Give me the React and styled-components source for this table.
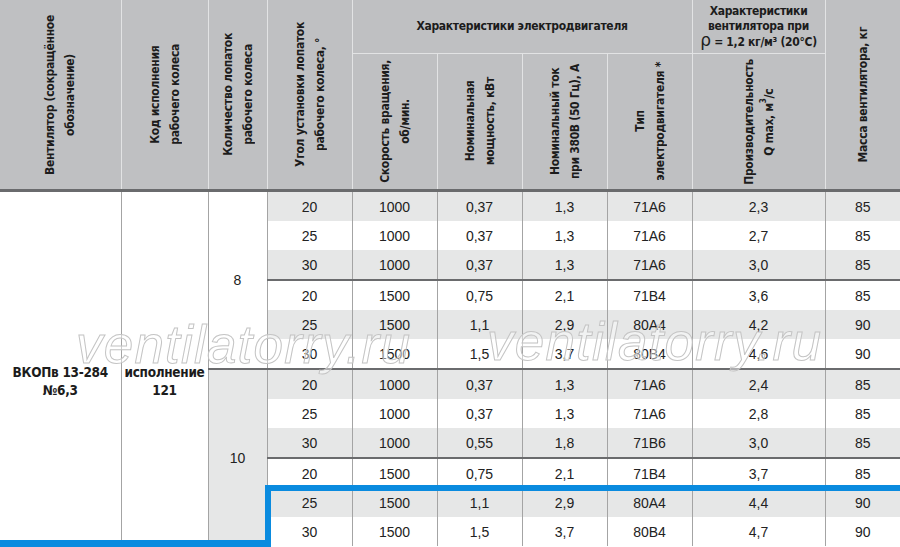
import React from 'react';
import styled, { createGlobalStyle } from 'styled-components';

const GlobalStyle = createGlobalStyle`
  html, body {
    margin: 0;
    padding: 0;
    background: #fff;
    overflow: hidden;
  }
  body {
    font-family: "Liberation Sans", Arial, sans-serif;
  }
`;

const NARROW = `"Liberation Sans Narrow", "DejaVu Sans Condensed", "Liberation Sans", sans-serif`;

const Page = styled.div`
  position: relative;
  width: 900px;
  height: 547px;
  overflow: hidden;
`;

const Table = styled.table`
  width: 900px;
  border-collapse: collapse;
  table-layout: fixed;
`;

const HeadCell = styled.th`
  background: #bfc0c2;
  color: #1c1c1c;
  font-family: ${NARROW};
  font-weight: bold;
  font-size: 12px;
  letter-spacing: -0.3px;
  line-height: 15px;
  padding: 0;
  text-align: center;
  vertical-align: middle;
  white-space: nowrap;
  overflow: hidden;
  border-left: 1px solid #e2e3e4;
  border-right: 1px solid #e2e3e4;
  border-top: none;
  border-bottom: ${(p) => (p.$group ? '1px solid #e2e3e4' : '3px solid #6a6b6d')};
  height: ${(p) => p.$h || 'auto'};
  &:first-child { border-left: none; }
  &:last-child { border-right: none; }
`;

const Vertical = styled.div`
  display: inline-block;
  vertical-align: middle;
  writing-mode: vertical-rl;
  transform: rotate(180deg);
  white-space: nowrap;
  text-align: center;
  line-height: 20px;
`;

const Rho = styled.span`
  font-family: "DejaVu Sans", sans-serif;
  font-size: 17px;
  font-weight: normal;
  line-height: 12px;
`;

const Sup = styled.sup`
  font-size: 8px;
  line-height: 0;
`;

const Cell = styled.td`
  height: 29px;
  padding: 0;
  text-align: center;
  vertical-align: middle;
  font-size: 14px;
  color: #222;
  background: ${(p) => (p.$shade ? '#e6e7e7' : '#fff')};
  border-left: 1px solid #a4a4a4;
  border-right: 1px solid #a4a4a4;
  border-top: ${(p) => (p.$sep ? '2px solid #6a6b6d' : 'none')};
  &:last-child { border-right: none; }
`;

const NameCell = styled.td`
  padding: 24px 0 0;
  text-align: center;
  vertical-align: middle;
  background: #fff;
  font-family: ${NARROW};
  font-weight: bold;
  font-size: 13.5px;
  letter-spacing: -0.3px;
  line-height: 18px;
  color: #1c1c1c;
  white-space: nowrap;
  border-right: 1px solid #a4a4a4;
`;

const Watermark = styled.span`
  position: absolute;
  top: ${(p) => p.$top}px;
  left: ${(p) => p.$left}px;
  font-family: "Liberation Sans", Arial, sans-serif;
  font-style: italic;
  font-size: 53px;
  letter-spacing: 1.2px;
  color: rgba(255, 255, 255, 0.45);
  -webkit-text-stroke: 1px #c4c4c4;
  pointer-events: none;
  white-space: nowrap;
`;

const Frame = styled.div`
  position: absolute;
  left: 265px;
  top: 485px;
  right: -10px;
  bottom: -10px;
  border-top: 6px solid #0a8bdf;
  border-left: 6px solid #0a8bdf;
`;

const Underline = styled.div`
  position: absolute;
  left: 0;
  top: 540px;
  width: 271px;
  height: 7px;
  background: #0a8bdf;
`;

const widths = [121, 87, 59, 85, 85, 85, 85, 85, 133, 75];

const rows = [
  ['20', '1000', '0,37', '1,3', '71А6', '2,3', '85'],
  ['25', '1000', '0,37', '1,3', '71А6', '2,7', '85'],
  ['30', '1000', '0,37', '1,3', '71А6', '3,0', '85'],
  ['20', '1500', '0,75', '2,1', '71В4', '3,6', '85'],
  ['25', '1500', '1,1', '2,9', '80А4', '4,2', '90'],
  ['30', '1500', '1,5', '3,7', '80В4', '4,6', '90'],
  ['20', '1000', '0,37', '1,3', '71А6', '2,4', '85'],
  ['25', '1000', '0,37', '1,3', '71А6', '2,8', '85'],
  ['30', '1000', '0,55', '1,8', '71В6', '3,0', '85'],
  ['20', '1500', '0,75', '2,1', '71В4', '3,7', '85'],
  ['25', '1500', '1,1', '2,9', '80А4', '4,4', '90'],
  ['30', '1500', '1,5', '3,7', '80В4', '4,7', '90'],
];

export default function App() {
  return (
    <Page>
      <GlobalStyle />
      <Table>
        <colgroup>
          {widths.map((w, i) => <col key={i} style={{ width: w }} />)}
        </colgroup>
        <thead>
          <tr>
            <HeadCell rowSpan={2}>
              <Vertical>Вентилятор (сокращённое<br />обозначение)</Vertical>
            </HeadCell>
            <HeadCell rowSpan={2}>
              <Vertical>Код исполнения<br />рабочего колеса</Vertical>
            </HeadCell>
            <HeadCell rowSpan={2}>
              <Vertical>Количество лопаток<br />рабочего колеса</Vertical>
            </HeadCell>
            <HeadCell rowSpan={2}>
              <Vertical>Угол установки лопаток<br />рабочего колеса, °</Vertical>
            </HeadCell>
            <HeadCell colSpan={4} $group $h="53px">Характеристики электродвигателя</HeadCell>
            <HeadCell $group $h="53px">
              Характеристики<br />вентилятора при<br /><Rho>ρ</Rho> = 1,2 кг/м³ (20°C)
            </HeadCell>
            <HeadCell rowSpan={2}>
              <Vertical>Масса вентилятора, кг</Vertical>
            </HeadCell>
          </tr>
          <tr>
            <HeadCell $h="135px">
              <Vertical>Скорость вращения,<br />об/мин.</Vertical>
            </HeadCell>
            <HeadCell>
              <Vertical>Номинальная<br />мощность, кВт</Vertical>
            </HeadCell>
            <HeadCell>
              <Vertical>Номинальный ток<br />при 380В (50 Гц), А</Vertical>
            </HeadCell>
            <HeadCell>
              <Vertical>Тип<br />электродвигателя *</Vertical>
            </HeadCell>
            <HeadCell>
              <Vertical>Производительность<br />Q max, м<Sup>3</Sup>/с</Vertical>
            </HeadCell>
          </tr>
        </thead>
        <tbody>
          {rows.map((r, i) => (
            <tr key={i}>
              {i === 0 && (
                <>
                  <NameCell rowSpan={12}>ВКОПв 13-284<br />№6,3</NameCell>
                  <NameCell rowSpan={12}>исполнение<br />121</NameCell>
                </>
              )}
              {i === 0 && <Cell rowSpan={6}>8</Cell>}
              {i === 6 && <Cell rowSpan={6} $shade $sep>10</Cell>}
              {r.map((v, j) => (
                <Cell key={j} $shade={i % 2 === 0} $sep={i === 3 || i === 6 || i === 9}>
                  {v}
                </Cell>
              ))}
            </tr>
          ))}
        </tbody>
      </Table>
      <Watermark $left={76} $top={314}>ventilatorry.ru</Watermark>
      <Watermark $left={487} $top={311}>ventilatorry.ru</Watermark>
      <Frame />
      <Underline />
    </Page>
  );
}
